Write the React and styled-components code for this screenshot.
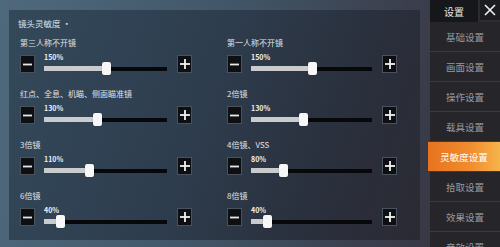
import React from "react";
import styled, { createGlobalStyle } from "styled-components";

const GlobalStyle = createGlobalStyle`
  html, body {
    margin: 0;
    padding: 0;
    background: #3a4656;
  }
  body {
    font-family: "Noto Sans CJK SC", "Noto Sans", sans-serif;
  }
`;

const Screen = styled.div`
  width: 500px;
  height: 247px;
  overflow: hidden;
  display: flex;
  background: linear-gradient(100deg, #4f697c 0%, #42586a 40%, #3b3f4d 75%, #36323c 100%);
`;

const Main = styled.div`
  flex: 1;
  padding: 10px 10px 7px 9px;
  display: flex;
`;

const Panel = styled.div`
  flex: 1;
  padding: 8px 0 0 9px;
  background: linear-gradient(110deg, #33495a 0%, #2e3d4e 45%, #2a303d 75%, #2b2a33 100%);
  display: flex;
  flex-direction: column;
`;

const Title = styled.div`
  color: #dfe4e8;
  font-size: 8.5px;
  line-height: 10px;
  height: 10px;
  margin-bottom: 9px;
`;

const Grid = styled.div`
  display: grid;
  grid-template-columns: 172px 170px;
  column-gap: 35px;
  row-gap: 15px;
  padding-left: 2px;
`;

const Block = styled.div`
  display: flex;
  flex-direction: column;
  gap: 6px;
`;

const Label = styled.div`
  color: #e0e3e6;
  font-size: 8px;
  line-height: 12px;
  height: 12px;
  white-space: nowrap;
`;

const Controls = styled.div`
  display: flex;
  align-items: flex-start;
  height: 18px;
`;

const StepButton = styled.div`
  width: 15px;
  height: 18px;
  box-sizing: border-box;
  flex: none;
  background: #0d0f12;
  border: 1px solid #4a525c;
  display: flex;
  align-items: center;
  justify-content: center;
  margin: ${(p) => (p.$side === "left" ? "0 9px 0 0" : "0 0 0 10px")};
`;

const Slider = styled.div`
  flex: 1;
  position: relative;
  height: 18px;
`;

const Percent = styled.div`
  position: absolute;
  left: 0;
  top: -2px;
  color: #f2f2f2;
  font-size: 7px;
  font-weight: 700;
  line-height: 9px;
`;

const Track = styled.div`
  position: absolute;
  left: 0;
  right: 0;
  top: 12px;
  height: 4px;
  background: #07080a;
`;

const Fill = styled.div`
  position: absolute;
  left: 0;
  top: -1px;
  height: 5px;
  background: #c9cbcd;
`;

const Thumb = styled.div`
  position: absolute;
  top: 7px;
  width: 9px;
  height: 13px;
  margin-left: -4px;
  border-radius: 2px;
  background: #f7f7f7;
  box-shadow: 0 0 1px rgba(0, 0, 0, 0.5);
`;

const Side = styled.div`
  width: 70px;
  flex: none;
  display: flex;
  flex-direction: column;
  background: #242328;
`;

const SideHead = styled.div`
  display: flex;
  gap: 2px;
  height: 23px;
  background: #2c2d33;
`;

const HeadTitle = styled.div`
  width: 48px;
  height: 22px;
  background: #16171b;
  color: #e8e8e8;
  font-size: 10px;
  display: flex;
  align-items: center;
  justify-content: center;
`;

const CloseBox = styled.div`
  width: 20px;
  height: 20px;
  background: #1b1c20;
  display: flex;
  align-items: center;
  justify-content: center;
`;

const MenuItem = styled.div`
  height: 29px;
  flex: none;
  border-bottom: 1px solid #3a3a40;
  display: flex;
  align-items: center;
  justify-content: center;
  font-size: 9.5px;
  color: ${(p) => (p.$active ? "#ffffff" : "#9a9b9f")};
  background: ${(p) =>
    p.$active
      ? "linear-gradient(90deg, #e8731f 0%, #f08d2f 60%, #f6b44a 100%)"
      : "#26252a"};
  margin-left: ${(p) => (p.$active ? "-2px" : "0")};
`;

const Minus = () => (
  <svg width="9" height="9" viewBox="0 0 9 9">
    <rect x="0" y="3.6" width="9" height="1.8" fill="#e8e8e8" />
  </svg>
);

const Plus = () => (
  <svg width="10" height="10" viewBox="0 0 10 10">
    <rect x="0" y="4.1" width="10" height="1.8" fill="#f2f2f2" />
    <rect x="4.1" y="0" width="1.8" height="10" fill="#f2f2f2" />
  </svg>
);

const Close = () => (
  <svg width="12" height="12" viewBox="0 0 12 12">
    <path d="M1 1 L11 11 M11 1 L1 11" stroke="#f0f0f0" strokeWidth="1.6" />
  </svg>
);

const rows = [
  { label: "第三人称不开镜", value: 150 },
  { label: "第一人称不开镜", value: 150 },
  { label: "红点、全息、机瞄、侧面瞄准镜", value: 130 },
  { label: "2倍镜", value: 130 },
  { label: "3倍镜", value: 110 },
  { label: "4倍镜、VSS", value: 80 },
  { label: "6倍镜", value: 40 },
  { label: "8倍镜", value: 40 },
];

const menu = [
  "基础设置",
  "画面设置",
  "操作设置",
  "载具设置",
  "灵敏度设置",
  "拾取设置",
  "效果设置",
  "音效设置",
];

const SensRow = ({ label, value }) => {
  const pct = `${(value / 300) * 100}%`;
  return (
    <Block>
      <Label>{label}</Label>
      <Controls>
        <StepButton $side="left">
          <Minus />
        </StepButton>
        <Slider>
          <Percent>{value}%</Percent>
          <Track>
            <Fill style={{ width: pct }} />
          </Track>
          <Thumb style={{ left: pct }} />
        </Slider>
        <StepButton $side="right">
          <Plus />
        </StepButton>
      </Controls>
    </Block>
  );
};

export default function App() {
  return (
    <>
      <GlobalStyle />
      <Screen>
        <Main>
          <Panel>
            <Title>镜头灵敏度 ·</Title>
            <Grid>
              {rows.map((r) => (
                <SensRow key={r.label} {...r} />
              ))}
            </Grid>
          </Panel>
        </Main>
        <Side>
          <SideHead>
            <HeadTitle>设置</HeadTitle>
            <CloseBox>
              <Close />
            </CloseBox>
          </SideHead>
          {menu.map((m) => (
            <MenuItem key={m} $active={m === "灵敏度设置"}>
              {m}
            </MenuItem>
          ))}
        </Side>
      </Screen>
    </>
  );
}
